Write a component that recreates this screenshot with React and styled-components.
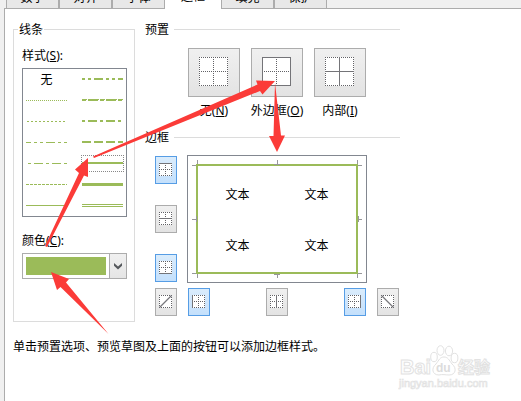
import React, { useState } from 'react';
import styled, { createGlobalStyle } from 'styled-components';

const GREEN = '#9bbb59';

const tabs = ['数字', '对齐', '字体', '边框', '填充', '保护'];

// filled top to bottom, left column first
const lineStyles = [
  { id: 'none', label: '无' },
  { id: 'hair', lines: [{ y: 7, w: 1, dash: '1 1' }] },
  { id: 'dotted', lines: [{ y: 7, w: 1, dash: '2 2', offset: 3 }] },
  { id: 'dash-dot-dot', lines: [{ y: 7, w: 1, dash: '9 3 3 3 3 3', offset: 4 }] },
  { id: 'dash-dot', lines: [{ y: 7, w: 1, dash: '9 3 3 3', offset: 10 }] },
  { id: 'dashed', lines: [{ y: 7, w: 1, dash: '3 1' }] },
  { id: 'thin', lines: [{ y: 7, w: 1 }] },
  { id: 'medium-dash-dot-dot', lines: [{ y: 6, w: 2, dash: '9 3 3 3 3 3', offset: 12 }] },
  {
    id: 'slant',
    lines: [
      { y: 6, w: 1, dash: '11 1 5 1', offset: 12 },
      { y: 7, w: 1, dash: '10 2 4 2', offset: 12 },
    ],
  },
  { id: 'medium-dash-dot', lines: [{ y: 6, w: 2, dash: '9 3 3 3', offset: 12 }] },
  { id: 'medium-dash', lines: [{ y: 6, w: 2, dash: '9 3' }] },
  { id: 'medium', lines: [{ y: 6, w: 2 }] },
  { id: 'thick', lines: [{ y: 6, w: 3 }] },
  { id: 'double', lines: [{ y: 6, w: 1 }, { y: 8, w: 1 }] },
];

const LineSample = ({ lines }) => (
  <svg width="41" height="15" shapeRendering="crispEdges" aria-hidden="true">
    {lines.map((l) => (
      <line
        key={l.y}
        x1="0"
        x2="41"
        y1={l.y + l.w / 2}
        y2={l.y + l.w / 2}
        stroke={GREEN}
        strokeWidth={l.w}
        strokeDasharray={l.dash}
        strokeDashoffset={l.offset}
      />
    ))}
  </svg>
);

const BorderIcon = ({ size, solid = [], diagonal }) => {
  const mid = size / 2;
  const end = size - 0.5;
  const edges = {
    top: [0, 0.5, size, 0.5],
    bottom: [0, end, size, end],
    left: [0.5, 0, 0.5, size],
    right: [end, 0, end, size],
    h: [0, mid, size, mid],
    v: [mid, 0, mid, size],
  };
  const names = Object.keys(edges).filter((n) => !diagonal || (n !== 'h' && n !== 'v'));
  names.sort((a, b) => solid.includes(a) - solid.includes(b));
  return (
    <svg width={size} height={size} aria-hidden="true">
      <rect width={size} height={size} fill="#fff" />
      <g shapeRendering="crispEdges">
        {names.map((n) => {
          const [x1, y1, x2, y2] = edges[n];
          return (
            <line
              key={n}
              x1={x1}
              y1={y1}
              x2={x2}
              y2={y2}
              stroke={solid.includes(n) ? '#747478' : '#626266'}
              strokeDasharray={solid.includes(n) ? undefined : '1 1'}
            />
          );
        })}
      </g>
      {diagonal === 'up' && <path d={`M0.5 ${end}L${end} 0.5`} stroke="#77777b" strokeWidth="1.3" />}
      {diagonal === 'down' && <path d={`M0.5 0.5L${end} ${end}`} stroke="#77777b" strokeWidth="1.3" />}
    </svg>
  );
};

const presets = [
  { id: 'none', text: '无', hotkey: 'N', solid: [] },
  { id: 'outline', text: '外边框', hotkey: 'O', solid: ['top', 'bottom', 'left', 'right'] },
  { id: 'inside', text: '内部', hotkey: 'I', solid: ['h', 'v'] },
];

const sideEdges = [
  { id: 'top', title: '上边框' },
  { id: 'h', title: '水平内框' },
  { id: 'bottom', title: '下边框' },
];

const bottomEdges = [
  { id: 'left', title: '左边框' },
  { id: 'v', title: '垂直内框' },
  { id: 'right', title: '右边框' },
];

const App = () => {
  const [style, setStyle] = useState('medium');
  const [on, setOn] = useState(['top', 'bottom', 'left', 'right']);

  const toggle = (id) => setOn(on.includes(id) ? on.filter((e) => e !== id) : [...on, id]);

  const edgeButton = ({ id, title }) => (
    <EdgeButton key={id} title={title} aria-pressed={on.includes(id)} $on={on.includes(id)} onClick={() => toggle(id)}>
      <BorderIcon size={13} solid={[id]} />
    </EdgeButton>
  );

  return (
    <Dialog>
      <GlobalStyle />
      <TabBar role="tablist">
        {tabs.map((t) => (
          <Tab key={t} role="tab" aria-selected={t === '边框'} $active={t === '边框'}>
            {t}
          </Tab>
        ))}
      </TabBar>
      <Panel role="tabpanel">
        <Columns>
          <LineGroup>
            <Legend $inset>线条</Legend>
            <FieldLabel id="style-label">
              样式(<u>S</u>):
            </FieldLabel>
            <StyleList role="listbox" aria-labelledby="style-label">
              {lineStyles.map((s) => (
                <StyleOption
                  key={s.id}
                  role="option"
                  aria-label={s.id}
                  aria-selected={style === s.id}
                  $selected={style === s.id}
                  onClick={() => setStyle(s.id)}
                >
                  {s.label || <LineSample lines={s.lines} />}
                </StyleOption>
              ))}
            </StyleList>
            <FieldLabel as="label" htmlFor="color">
              颜色(<u>C</u>):
            </FieldLabel>
            <ColorBox>
              <ColorSelect id="color" defaultValue="green">
                <option value="green">绿色</option>
              </ColorSelect>
              <Swatch />
              <DropArrow>
                <svg width="8" height="7" viewBox="0 0 8 7" aria-hidden="true">
                  <path d="M0 0L4 3.4L8 0V2.8L4 6.6L0 2.8Z" fill="#55585c" />
                </svg>
              </DropArrow>
            </ColorBox>
          </LineGroup>

          <Right>
            <RuledGroup>
              <Legend>预置</Legend>
              <Presets>
                {presets.map((p) => (
                  <Preset key={p.id}>
                    <PresetButton id={`preset-${p.id}`}>
                      <BorderIcon size={29} solid={p.solid} />
                    </PresetButton>
                    <PresetLabel htmlFor={`preset-${p.id}`}>
                      {p.text}(<u>{p.hotkey}</u>)
                    </PresetLabel>
                  </Preset>
                ))}
              </Presets>
            </RuledGroup>
            <RuledGroup>
              <Legend>边框</Legend>
              <BorderGrid>
                <SideEdges>{sideEdges.map(edgeButton)}</SideEdges>
                <Preview>
                  <Sheet>
                    <span>文本</span>
                    <span>文本</span>
                    <span>文本</span>
                    <span>文本</span>
                  </Sheet>
                  <Ticks width="178" height="126" aria-hidden="true">
                    <path
                      d="M4 9.5H8M9.5 4V8M170 9.5H174M169.5 4V8M4 117.5H8M9.5 118V122M170 117.5H174M169.5 118V122
                         M89.5 4V8M86 8.5H92M89.5 118V122M86 118.5H92M4 63.5H8M8.5 60V66M170 63.5H174M170.5 60V66"
                      stroke="#97979b"
                      fill="none"
                    />
                  </Ticks>
                </Preview>
                <span />
                <EdgeButton title="斜线">
                  <BorderIcon size={13} diagonal="up" />
                </EdgeButton>
                <BottomEdges>{bottomEdges.map(edgeButton)}</BottomEdges>
                <EdgeButton title="反斜线">
                  <BorderIcon size={13} diagonal="down" />
                </EdgeButton>
              </BorderGrid>
            </RuledGroup>
          </Right>
        </Columns>
        <Hint>单击预置选项、预览草图及上面的按钮可以添加边框样式。</Hint>
      </Panel>

      <Arrows width="300" height="340" aria-hidden="true">
        <path d="M45 246L79 173L75 169.5L88 158V177L84 175.5L47 247Z" />
        <path d="M93 156.5L257.5 84.5L256 80.5L275 81L262.5 94.5L260 91L94 158Z" />
        <path d="M275 83L281 135.5H285L277 152L269 136H273.5Z" />
        <path d="M108.5 334L60.5 287L57 290L51 272L69 279L66 282.5Z" />
      </Arrows>

      <Watermark width="100" height="50" aria-hidden="true">
        <g fill="#fff" stroke="#e2e2e2">
          <text x="2" y="33" fontSize="20" fontWeight="700">Bai</text>
          <ellipse cx="36" cy="16" rx="3.3" ry="4.7" />
          <ellipse cx="42.5" cy="9.5" rx="3.5" ry="4.8" />
          <ellipse cx="51" cy="10" rx="3.6" ry="4.8" />
          <ellipse cx="56.5" cy="17" rx="3.4" ry="4.7" />
          <path d="M46 16C50 16 51 19 54 23C59 27 58 34 51 34C48 34 44 33 41 34C34 34 33 27 38 23C41 19 42 16 46 16Z" />
          <text x="60" y="32" fontSize="16" fontWeight="700">经验</text>
        </g>
        <text x="38" y="31" fontSize="12" fontWeight="700" fill="#dcdcdc">du</text>
        <text x="1" y="46" fontSize="11" fill="#fff" stroke="#e2e2e2" strokeWidth="0.7">jingyan.baidu.com</text>
      </Watermark>
    </Dialog>
  );
};

export default App;

const GlobalStyle = createGlobalStyle`
  * {
    box-sizing: border-box;
  }
  body {
    margin: 0;
    background: #f0f0f0;
  }
  body, button, select {
    font-family: "Noto Sans", "Noto Sans CJK SC", sans-serif;
    font-size: 12px;
    line-height: 16px;
    color: #000;
  }
  svg {
    display: block;
  }
`;

const Dialog = styled.div`
  position: relative;
  display: flex;
  flex-direction: column;
  min-height: 100vh;
  padding-left: 4px;
  overflow: hidden;
`;

const TabBar = styled.div`
  position: relative;
  z-index: 1;
  display: flex;
  align-items: flex-end;
  height: 9px;
  padding-left: 2px;
`;

const Tab = styled.button`
  flex: none;
  width: ${(p) => (p.$active ? '56px' : '53px')};
  height: 20px;
  margin-bottom: ${(p) => (p.$active ? '0' : '1px')};
  padding: ${(p) => (p.$active ? '0 0 4px' : '0')};
  border: solid #acacac;
  border-width: ${(p) => (p.$active ? '0' : '0 1px')};
  background: ${(p) => (p.$active ? '#fff' : '#e8e8e8')};
`;

const Panel = styled.div`
  flex: 1;
  margin-top: -1px;
  padding: 11px 8px;
  border: solid #acacac;
  border-width: 1px 0 0 1px;
  background: #fff;
`;

const Columns = styled.div`
  display: flex;
  gap: 10px;
  max-width: 387px;
`;

const LineGroup = styled.fieldset`
  flex: none;
  width: 122px;
  margin: 0;
  padding: 0 7px 42px 8px;
  border: 1px solid #dcdcdc;
`;

const Legend = styled.legend`
  margin-left: ${(p) => (p.$inset ? '-4px' : '0')};
  padding: ${(p) => (p.$inset ? '2px 1px 0' : '2px 5px 0 0')};
`;

const FieldLabel = styled.div`
  display: block;
  margin: 16px 0 4px;

  legend + & {
    margin-top: 10px;
  }
`;

const StyleList = styled.div`
  display: grid;
  grid-auto-flow: column;
  grid-template-rows: repeat(7, 21px);
  justify-content: space-between;
  align-items: center;
  padding: 0 3px;
  border: 1px solid #828790;
`;

const StyleOption = styled.button`
  width: 41px;
  height: 15px;
  padding: 0;
  border: 0;
  background: none;
  line-height: 15px;
  outline: ${(p) => (p.$selected ? '1px dotted #888' : 'none')};
`;

const ColorBox = styled.div`
  display: grid;
  grid-template-columns: 1fr 18px;
  height: 26px;

  > * {
    grid-row: 1;
  }
`;

const ColorSelect = styled.select`
  grid-column: 1 / 3;
  appearance: none;
  border: 1px solid #acacac;
  border-radius: 0;
  background: #fff;
  color: transparent;
`;

const Swatch = styled.span`
  grid-column: 1;
  margin: 4px 3px 4px 4px;
  background: ${GREEN};
  pointer-events: none;
`;

const DropArrow = styled.span`
  grid-column: 2;
  display: flex;
  align-items: center;
  justify-content: center;
  border: 1px solid #acacac;
  background: linear-gradient(#f0f0f0, #e5e5e5);
  pointer-events: none;
`;

const Right = styled.div`
  flex: 1;
  display: flex;
  flex-direction: column;
  gap: 9px;
`;

const RuledGroup = styled.fieldset`
  margin: 0;
  padding: 0;
  border: 0;
  border-top: 1px solid #dcdcdc;
`;

const Presets = styled.div`
  display: flex;
  gap: 11px;
  padding: 10px 0 0 43px;
`;

const Preset = styled.div`
  display: flex;
  flex-direction: column;
  align-items: center;
  gap: 6px;
  width: 52px;
`;

const PresetButton = styled.button`
  padding: 8px 11px 10px 10px;
  border: 1px solid #acacac;
  background: linear-gradient(#f0f0f0, #e3e3e3);
`;

const PresetLabel = styled.label`
  white-space: nowrap;
`;

const BorderGrid = styled.div`
  display: grid;
  grid-template-columns: 22px 180px 22px;
  gap: 5px 10px;
  padding: 9px 0 0 10px;
`;

const SideEdges = styled.div`
  display: flex;
  flex-direction: column;
  justify-content: space-between;
  padding: 1px 0;
`;

const BottomEdges = styled.div`
  display: flex;
  justify-content: space-between;
  padding: 0 1px;
`;

const EdgeButton = styled.button`
  width: 22px;
  height: 28px;
  padding: 6px 4px 7px 3px;
  border: 1px solid ${(p) => (p.$on ? '#569de5' : '#acacac')};
  background: ${(p) => (p.$on ? 'linear-gradient(#daecfc, #c4e0fc)' : 'linear-gradient(#f0f0f0, #e3e3e3)')};
`;

const Preview = styled.div`
  position: relative;
  height: 128px;
  padding: 8px;
  border: 1px solid #828790;
`;

const Sheet = styled.div`
  display: grid;
  grid-template-columns: 1fr 1fr;
  place-items: center;
  height: 100%;
  padding-top: 3px;
  border: 2px solid ${GREEN};
`;

const Ticks = styled.svg`
  position: absolute;
  top: 0;
  left: 0;
`;

const Hint = styled.p`
  margin: 17px 0 0;
`;

const Arrows = styled.svg`
  position: absolute;
  top: 0;
  left: 0;
  z-index: 2;
  fill: #fb3b38;
  pointer-events: none;
`;

const Watermark = styled.svg`
  position: absolute;
  right: 23px;
  bottom: 10px;
  font-family: "Liberation Sans", "Noto Sans CJK SC", sans-serif;
  pointer-events: none;
`;
